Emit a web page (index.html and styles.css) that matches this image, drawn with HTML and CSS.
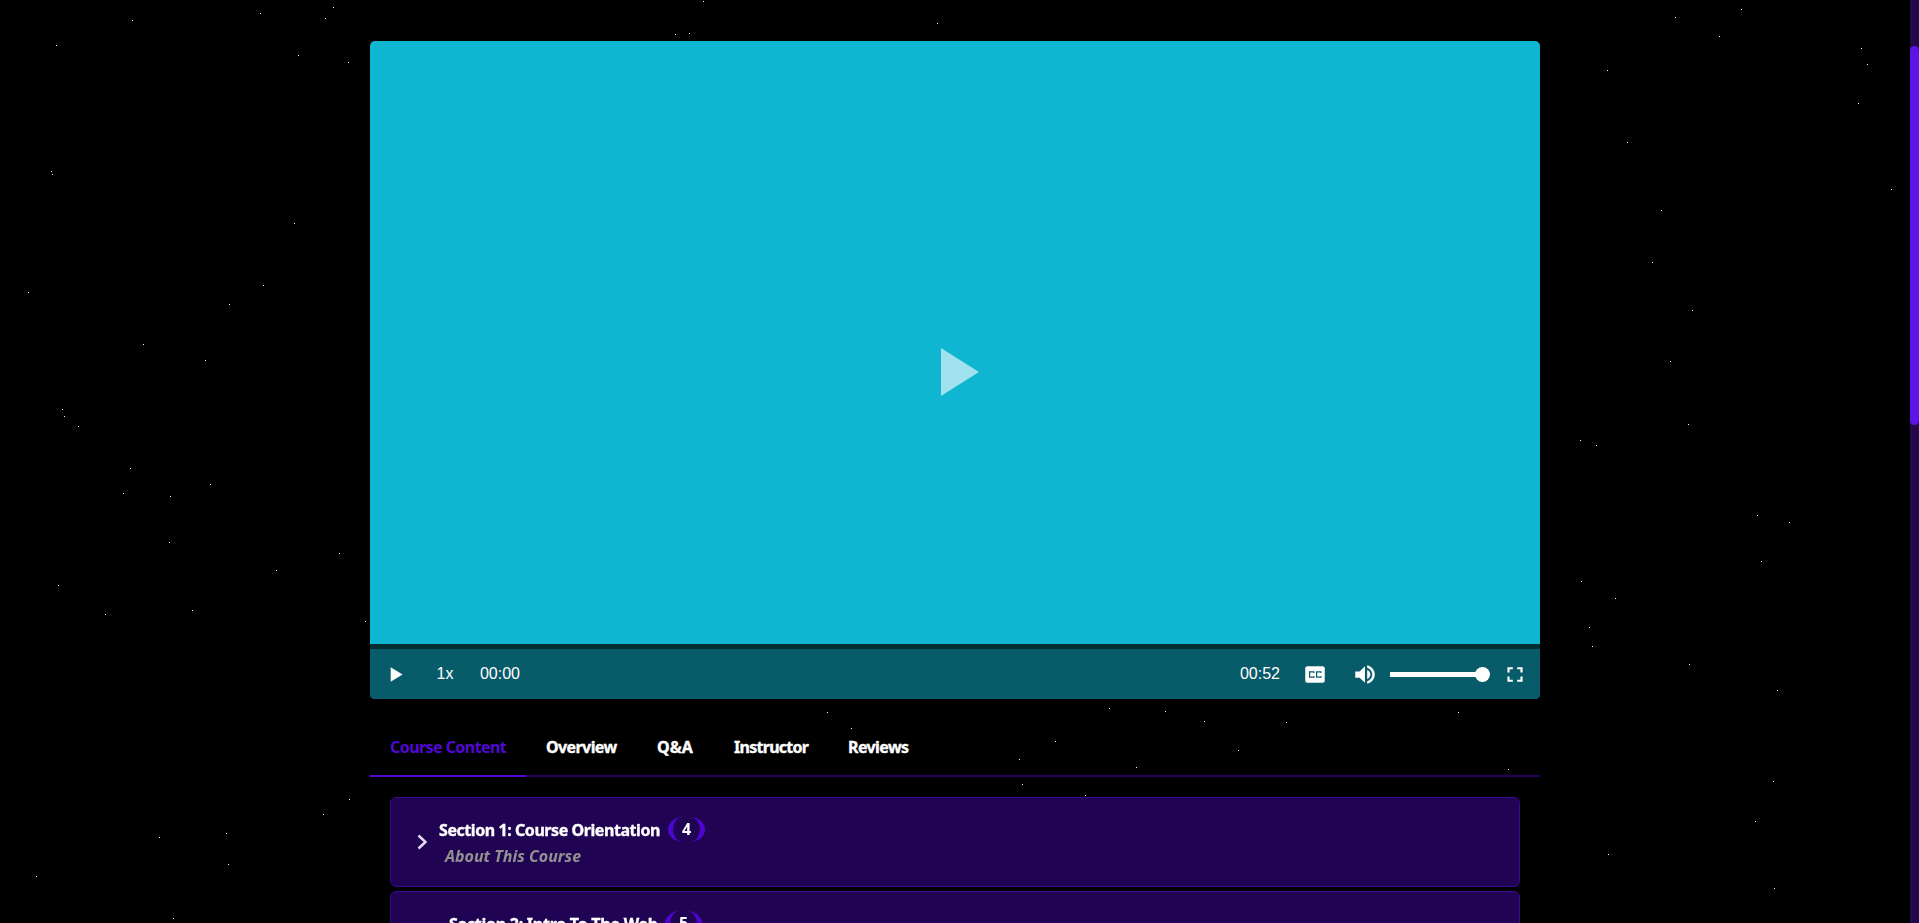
FILE: index.html
```html
<!DOCTYPE html>
<html lang="en">
<head>
<meta charset="utf-8">
<title>Course</title>
<link rel="stylesheet" href="styles.css">
</head>
<body>
<div class="viewport">
<svg class="stars" id="stars" aria-hidden="true"></svg>
<main class="page">
  <section class="player">
    <div class="screen">
      <svg class="big-play" viewBox="0 0 38 48"><path d="M0 0L38 24L0 48Z"/></svg>
    </div>
    <div class="progress"></div>
    <div class="controls">
      <button class="ctl"><svg class="icon" viewBox="0 0 24 24" preserveAspectRatio="none"><path d="M8 5v14l11-7z"/></svg></button>
      <button class="ctl">1x</button>
      <span class="time">00:00</span>
      <span class="spacer"></span>
      <span class="time">00:52</span>
      <button class="ctl"><svg class="icon" viewBox="0 0 24 24" preserveAspectRatio="none"><rect x="3" y="4" width="18" height="16" rx="2"/><path class="cc" d="M11 10.600V9.500H7V14.500H11V13.400M17.500 10.600V9.500H13.500V14.500H17.500V13.400"/></svg></button>
      <button class="ctl"><svg class="icon" viewBox="0 0 24 24" preserveAspectRatio="none"><path d="M3 9v6h4l5 5V4L7 9H3zm14 3c0-1.770-1.020-3.490-3-4.330v8.650c1.980-.830 3-2.550 3-4.320zM14 3.100v2.400c2.700.860 4.700 3.440 4.700 6.500s-2 5.650-4.700 6.500v2.400c4.010-.910 7-4.490 7-8.900s-2.990-7.990-7-8.900z"/></svg></button>
      <div class="volume"><div class="track"></div><div class="knob"></div></div>
      <button class="ctl"><svg class="icon" viewBox="0 0 24 24" preserveAspectRatio="none"><path d="M7 14H5v5h5v-2H7v-3zm-2-4h2V7h3V5H5v5zm12 7h-3v2h5v-5h-2v3zM14 5v2h3v3h2V5h-5z"/></svg></button>
    </div>
  </section>
  <nav class="tabs">
    <a class="tab tab-content active">Course Content</a>
    <a class="tab tab-overview">Overview</a>
    <a class="tab tab-qa">Q&amp;A</a>
    <a class="tab tab-instructor">Instructor</a>
    <a class="tab tab-reviews">Reviews</a>
  </nav>
  <div class="sections">
    <article class="card">
      <svg class="chevron" viewBox="0 0 10 16"><path d="M1.500 1.500L8.500 8L1.500 14.500"/></svg>
      <div class="info">
        <div class="row"><h3 class="title">Section 1: Course Orientation</h3><span class="count">4</span></div>
        <p class="sub">About This Course</p>
      </div>
    </article>
    <article class="card second">
      <div class="info">
        <div class="row"><h3 class="title">Section 2: Intro To The Web</h3><span class="count">5</span></div>
      </div>
    </article>
  </div>
</main>
<div class="scrollbar"><div class="thumb"></div></div>
</div>
<script src="stars.js"></script>
</body>
</html>
```
FILE: styles.css
```css
* { box-sizing: border-box; }
html, body { margin: 0; height: 100%; overflow: hidden; background: #000; }
body { color: #fff; font-family: "Noto Sans", "Open Sans", sans-serif; font-size: 16px; }
.viewport { position: relative; height: 100vh; overflow: hidden; }
.stars { position: absolute; left: 0; top: 0; width: 1910px; height: 100%; fill: #fff; }
.page { position: relative; width: 1170px; height: 100%; margin-left: 370px; padding-top: 41px; overflow: hidden; }
.player { display: flex; flex-direction: column; height: 658px; border-radius: 5px; overflow: hidden; background: #10b5d1; }
.screen { flex: 1; display: flex; justify-content: center; padding: 307px 0 0 9px; }
.big-play { width: 38px; height: 48px; fill: #fff; opacity: .6; }
.progress { height: 5px; background: #052d34; }
.controls { display: flex; align-items: center; height: 50px; background: #085b69; font: 16px "Liberation Sans", Arial, sans-serif; }
.ctl { display: flex; align-items: center; justify-content: center; width: 50px; height: 50px; padding: 0; border: 0; background: none; color: #fff; font: inherit; }
.icon { width: 26px; height: 25px; fill: #fff; }
.cc { fill: none; stroke: #085b69; stroke-width: 1.1; }
.time { width: 60px; text-align: center; }
.spacer { flex: 1; }
.volume { display: flex; align-items: center; width: 100px; }
.track { flex: 1; height: 5px; background: #fff; }
.knob { width: 15px; height: 15px; margin-left: -1px; border-radius: 50%; background: #fff; }
.tabs { display: flex; height: 78px; border-bottom: 2px solid #210459; }
.tab { height: 78px; padding: 35px 0 0 20px; line-height: 27px; font-weight: 700; white-space: nowrap; -webkit-text-stroke: .35px #fff; }
.tab.active { color: #5108d4; border-bottom: 2px solid #5108d4; -webkit-text-stroke: 0; }
.tab-content { width: 156px; letter-spacing: -.56px; }
.tab-overview { width: 111px; letter-spacing: -.6px; }
.tab-qa { width: 77px; letter-spacing: 0; }
.tab-instructor { width: 114px; letter-spacing: -.72px; }
.tab-reviews { letter-spacing: -.6px; }
.sections { display: flex; flex-direction: column; gap: 4px; padding: 20px; }
.card { display: flex; flex: none; height: 90px; padding: 19px 26px; border: 1px solid #3a0a8c; border-radius: 6px; background: rgba(33, 4, 86, .97); backdrop-filter: blur(2px); }
.chevron { width: 10px; height: 16px; margin: 17px 12px 0 0; fill: none; stroke: #e4dcf0; stroke-width: 2.5; }
.row { display: flex; align-items: center; height: 25px; gap: 8px; }
.title { margin: 0; width: 221px; font-size: 16px; font-weight: 700; letter-spacing: -.43px; white-space: nowrap; -webkit-text-stroke: .35px #fff; }
.count { width: 37px; height: 25px; border: 0 solid #4c06cf; border-width: 0 5px; border-radius: 15px / 12.5px; line-height: 24px; text-align: center; font-weight: 700; }
.sub { margin: 2px 0 0 6px; line-height: 24px; font-weight: 700; font-style: italic; color: #929090; white-space: nowrap; }
.second { padding-left: 58px; }
.second .title { width: 208px; letter-spacing: -.26px; }
.scrollbar { position: absolute; top: 0; right: 0; width: 9px; height: 100%; padding-top: 46px; background: #220a4a; }
.thumb { height: 379px; border-radius: 5px; background: #5b14e6; }
```
FILE: stars.js
```js
const stars = [
  [333,7],[260,13],[325,18],[132,20],[56,45],[298,55],[348,62],[51,171],[52,174],[294,223],[263,285],[28,292],[229,304],[143,344],[205,360],[62,409],[64,416],[78,426],
  [130,468],[210,484],[123,493],[170,496],[169,542],[339,553],[276,570],[58,585],[192,610],[105,614],[365,621],[349,799],[323,814],[226,833],[159,837],[228,864],[36,876],[173,918],
  [1741,9],[1675,17],[1719,36],[1861,48],[1867,64],[1607,70],[1858,103],[1627,142],[1891,189],[1661,210],[1652,262],[1692,310],[1670,361],[1688,424],[1580,440],[1596,445],
  [1757,515],[1789,522],[1761,561],[1581,581],[1615,598],[1589,627],[1592,646],[1689,664],[1777,690],[1773,781],[1755,821],[1608,854],[1774,888],
  [703,1],[675,34],[689,33],[937,23],
  [827,712],[851,728],[1109,708],[1165,711],[1204,721],[1286,722],[1458,712],[1055,741],[1019,759],[1238,750],[1136,767],[1508,769],[1022,784],[1085,795],
  [868,814],[873,809],[973,813],[1250,813],[1357,824],[806,845],[1115,855],[1020,861],[1251,861],[1417,879],[1495,880],[1500,880],[825,884],[1350,884],[828,905],[1148,911],[971,916],
  [478,798],[680,803],[518,841],[623,826],[569,902]
];
document.getElementById('stars').innerHTML = stars
  .map(([x, y]) => `<rect x="${x}" y="${y}" width="1" height="1"/>`)
  .join('');
```
